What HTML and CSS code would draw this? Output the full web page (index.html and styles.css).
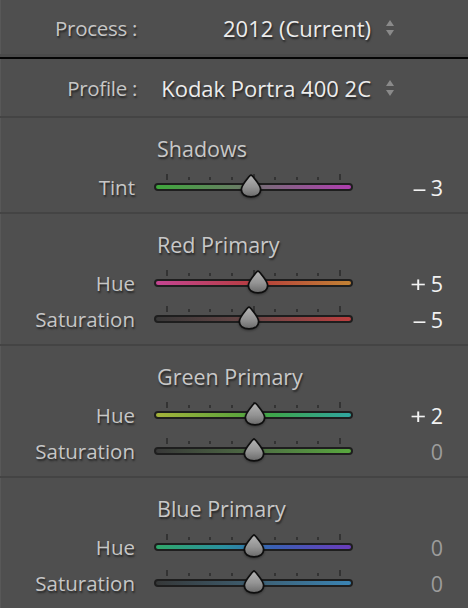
FILE: index.html
```html
<!DOCTYPE html>
<html>
<head>
<meta charset="utf-8">
<link rel="stylesheet" href="styles.css">
</head>
<body>
<div class="panel">
  <div class="popup-row process">
    <span class="popup-label">Process :</span>
    <span class="popup-value">2012 (Current)</span>
    <span class="stepper"><i class="up"></i><i class="down"></i></span>
  </div>
  <div class="popup-row profile">
    <span class="popup-label">Profile :</span>
    <span class="popup-value">Kodak Portra 400 2C</span>
    <span class="stepper"><i class="up"></i><i class="down"></i></span>
  </div>

  <section class="group">
    <h2 class="group-title">Shadows</h2>
    <div class="slider-row">
      <span class="s-label">Tint</span>
      <div class="slider">
        <div class="ticks"><b class="major"></b><b></b><b></b><b></b><b class="major"></b><b></b><b></b><b></b><b class="major"></b></div>
        <div class="track tint"></div>
        <svg class="thumb" style="left: calc(50% - 1.5%)" viewBox="0 0 22 24"><use href="#drop"/></svg>
      </div>
      <span class="s-value"><span class="sign">–</span>3</span>
    </div>
  </section>

  <section class="group">
    <h2 class="group-title">Red Primary</h2>
    <div class="slider-row">
      <span class="s-label">Hue</span>
      <div class="slider">
        <div class="ticks"><b class="major"></b><b></b><b></b><b></b><b class="major"></b><b></b><b></b><b></b><b class="major"></b></div>
        <div class="track red-hue"></div>
        <svg class="thumb" style="left: calc(50% + 2.5%)" viewBox="0 0 22 24"><use href="#drop"/></svg>
      </div>
      <span class="s-value"><span class="sign">+</span>5</span>
    </div>
    <div class="slider-row">
      <span class="s-label">Saturation</span>
      <div class="slider">
        <div class="ticks"><b class="major"></b><b></b><b></b><b></b><b class="major"></b><b></b><b></b><b></b><b class="major"></b></div>
        <div class="track red-sat"></div>
        <svg class="thumb" style="left: calc(50% - 2.5%)" viewBox="0 0 22 24"><use href="#drop"/></svg>
      </div>
      <span class="s-value"><span class="sign">–</span>5</span>
    </div>
  </section>

  <section class="group">
    <h2 class="group-title">Green Primary</h2>
    <div class="slider-row">
      <span class="s-label">Hue</span>
      <div class="slider">
        <div class="ticks"><b class="major"></b><b></b><b></b><b></b><b class="major"></b><b></b><b></b><b></b><b class="major"></b></div>
        <div class="track green-hue"></div>
        <svg class="thumb" style="left: calc(50% + 1%)" viewBox="0 0 22 24"><use href="#drop"/></svg>
      </div>
      <span class="s-value"><span class="sign">+</span>2</span>
    </div>
    <div class="slider-row">
      <span class="s-label">Saturation</span>
      <div class="slider">
        <div class="ticks"><b class="major"></b><b></b><b></b><b></b><b class="major"></b><b></b><b></b><b></b><b class="major"></b></div>
        <div class="track green-sat"></div>
        <svg class="thumb" style="left: 50%" viewBox="0 0 22 24"><use href="#drop"/></svg>
      </div>
      <span class="s-value zero">0</span>
    </div>
  </section>

  <section class="group">
    <h2 class="group-title">Blue Primary</h2>
    <div class="slider-row">
      <span class="s-label">Hue</span>
      <div class="slider">
        <div class="ticks"><b class="major"></b><b></b><b></b><b></b><b class="major"></b><b></b><b></b><b></b><b class="major"></b></div>
        <div class="track blue-hue"></div>
        <svg class="thumb" style="left: 50%" viewBox="0 0 22 24"><use href="#drop"/></svg>
      </div>
      <span class="s-value zero">0</span>
    </div>
    <div class="slider-row">
      <span class="s-label">Saturation</span>
      <div class="slider">
        <div class="ticks"><b class="major"></b><b></b><b></b><b></b><b class="major"></b><b></b><b></b><b></b><b class="major"></b></div>
        <div class="track blue-sat"></div>
        <svg class="thumb" style="left: 50%" viewBox="0 0 22 24"><use href="#drop"/></svg>
      </div>
      <span class="s-value zero">0</span>
    </div>
  </section>
</div>

<svg class="defs" width="0" height="0">
  <defs>
    <linearGradient id="thumbfill" x1="0" y1="0" x2="0" y2="1">
      <stop offset="0" stop-color="#b4b4b4"/>
      <stop offset="0.55" stop-color="#939393"/>
      <stop offset="1" stop-color="#6a6a6a"/>
    </linearGradient>
    <path id="drop" d="M11 1.2 C12 1.2 13 2.6 15 5.2 C18 9 20.6 12 20.6 15.6 C20.6 20.2 16.6 22.9 11 22.9 C5.4 22.9 1.4 20.2 1.4 15.6 C1.4 12 4 9 7 5.2 C9 2.6 10 1.2 11 1.2 Z" fill="url(#thumbfill)" stroke="#0e0e0e" stroke-width="1.7" stroke-linejoin="round"/>
  </defs>
</svg>
</body>
</html>
```

FILE: styles.css
```css
html, body {
  margin: 0;
  padding: 0;
}
body {
  background: #4f4f4f;
  width: 468px;
  height: 608px;
  overflow: hidden;
  font-family: "Open Sans", "Noto Sans", sans-serif;
}
.panel {
  width: 468px;
  height: 608px;
  background: #4f4f4f;
  box-shadow: inset 1px 0 0 #585858;
  display: flex;
  flex-direction: column;
}
.popup-row {
  display: flex;
  align-items: center;
  height: 58px;
  padding-right: 73px;
  text-shadow: 1px 2px 2px rgba(0, 0, 0, 0.55);
}
.process {
  border-bottom: 2px solid #050505;
  box-shadow: inset 0 -3px 0 #4a4a4a;
}
.profile {
  padding-top: 2px;
  box-sizing: border-box;
  border-bottom: 2px solid #444444;
  height: 60px;
}
.popup-label {
  width: 137px;
  text-align: right;
  color: #c6c6c6;
  font-size: 20.5px;
  letter-spacing: -0.3px;
}
.popup-value {
  flex: 1;
  text-align: right;
  color: #ececec;
  font-size: 22px;
}
.stepper {
  margin-left: 14px;
  width: 10px;
  display: flex;
  flex-direction: column;
  align-items: center;
  gap: 4px;
}
.stepper i {
  width: 0;
  height: 0;
  border-left: 4.5px solid transparent;
  border-right: 4.5px solid transparent;
}
.stepper .up {
  border-bottom: 6px solid #8a8a8a;
}
.stepper .down {
  border-top: 6px solid #8a8a8a;
}
.group {
  padding: 19px 0 7px;
  border-bottom: 2px solid #444444;
}
.group:last-child {
  border-bottom: none;
}
.group-title {
  margin: 0 0 8px 157px;
  height: 24px;
  line-height: 24px;
  font-size: 21.5px;
  font-weight: normal;
  color: #c8c8c8;
  text-shadow: 1px 2px 2px rgba(0, 0, 0, 0.55);
}
.slider-row {
  display: grid;
  grid-template-columns: 135px 199px 1fr;
  column-gap: 19px;
  align-items: center;
  height: 36px;
  padding-right: 25px;
  font-size: 20.5px;
}
.s-label {
  text-align: right;
  color: #c6c6c6;
  text-shadow: 1px 2px 2px rgba(0, 0, 0, 0.55);
}
.s-value {
  text-align: right;
  color: #f2f2f2;
  font-size: 21.5px;
}
.s-value .sign {
  display: inline-block;
  margin-right: 6px;
  transform: scaleX(1.3);
}
.s-value.zero {
  color: #9c9c9c;
}
.slider {
  position: relative;
  display: flex;
  flex-direction: column;
  height: 26px;
}
.ticks {
  display: flex;
  justify-content: space-between;
  align-items: flex-end;
  height: 6px;
  padding: 0 12px;
  margin-bottom: 3px;
}
.ticks b {
  width: 2px;
  height: 3px;
  background: #333333;
}
.ticks b.major {
  height: 6px;
}
.track {
  height: 4px;
  border: 2px solid #1e1e1e;
  border-radius: 4px;
}
.tint { background: linear-gradient(to right, #3fa83c, #6a7a66 45%, #7a6a7a 55%, #b03eb0); }
.red-hue { background: linear-gradient(to right, #c44592, #b83e48 45%, #b84a3a 60%, #c28234); }
.red-sat { background: linear-gradient(to right, #383838, #6a4646 50%, #be3e3e); }
.green-hue { background: linear-gradient(to right, #a4b23a, #62a63c 40%, #3ea64c 60%, #30a6a0); }
.green-sat { background: linear-gradient(to right, #383838, #4e6c44 50%, #58a83e); }
.blue-hue { background: linear-gradient(to right, #30a86a, #2a90a0 35%, #3a60b4 60%, #6a3cbc); }
.blue-sat { background: linear-gradient(to right, #363838, #3e5e70 50%, #3a84b4); }
.thumb {
  position: absolute;
  top: 0;
  width: 22px;
  height: 24px;
  transform: translateX(-50%);
  filter: drop-shadow(0 1px 1px rgba(0, 0, 0, 0.35));
}
.defs {
  position: absolute;
  width: 0;
  height: 0;
}
```
